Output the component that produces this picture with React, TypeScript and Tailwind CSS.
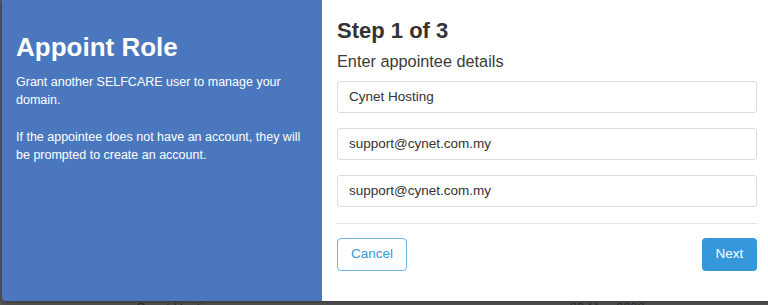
import React from "react";

export default function App() {
  return (
    <div className="w-[768px] h-[305px] overflow-hidden bg-[#5a5a5a] font-['Liberation_Sans',Arial,sans-serif]">
      <div className="flex w-[770px] h-[301px] ml-[2px] rounded-b-[4px] overflow-hidden shadow-[0_2px_6px_rgba(0,0,0,0.4)]">
        <div className="w-[320px] shrink-0 bg-[#4a77bd] text-white pl-[14px] pr-[12px] pt-[34px]">
          <h1 className="text-[26px] leading-[26px] font-bold">Appoint Role</h1>
          <p className="mt-[13px] text-[12.5px] leading-[18px]">
            Grant another SELFCARE user to manage your domain.
          </p>
          <p className="mt-[19px] text-[12.5px] leading-[18px]">
            If the appointee does not have an account, they will be prompted to create an account.
          </p>
        </div>
        <div className="flex-1 bg-white px-[15px] pt-[20px] text-[#333]">
          <h2 className="text-[22px] leading-[22px] font-bold">Step 1 of 3</h2>
          <p className="mt-[9px] text-[16.3px] leading-[20px] text-[#3a3a3a]">Enter appointee details</p>
          <div className="mt-[10px] flex flex-col gap-[15px]">
            {["Cynet Hosting", "support@cynet.com.my", "support@cynet.com.my"].map((v, i) => (
              <div
                key={i}
                className="h-[32px] border border-[#dcdcdc] rounded-[3px] flex items-center pl-[11px] text-[13.5px] text-[#333]"
              >
                {v}
              </div>
            ))}
          </div>
          <div className="mt-[16px] h-px bg-[#e3e3e3]" />
          <div className="mt-[14px] flex justify-between">
            <button className="h-[33px] w-[70px] border border-[#6db3e6] rounded-[4px] text-[13.5px] text-[#3498db] bg-white">
              Cancel
            </button>
            <button className="h-[33px] w-[55px] rounded-[4px] text-[13.5px] text-white bg-[#3498db]">
              Next
            </button>
          </div>
        </div>
      </div>
      <div className="flex text-[13px] leading-[14px] text-[#2a2a2a]">
        <span className="ml-[136px]">Cynet Hosting</span>
        <span className="ml-[352px]">30 May 2023</span>
      </div>
    </div>
  );
}
